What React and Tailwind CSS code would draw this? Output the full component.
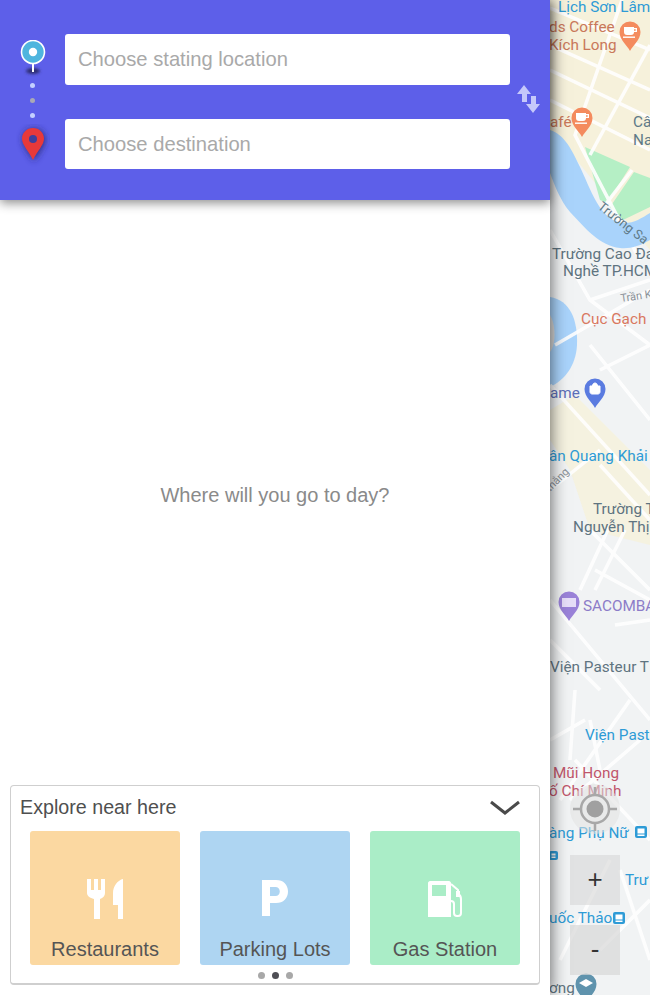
const FONT = "font-['Liberation_Sans',Arial,sans-serif]"

function StartPin() {
  return (
    <svg width="30" height="38" viewBox="0 0 30 38" className="block">
      <defs>
        <filter id="soft" x="-50%" y="-100%" width="200%" height="300%">
          <feGaussianBlur stdDeviation="1.6" />
        </filter>
      </defs>
      <ellipse cx="15" cy="31" rx="7" ry="3" fill="#2a2a6e" filter="url(#soft)" />
      <rect x="14" y="20" width="2" height="12" fill="#fff" />
      <circle cx="15" cy="12" r="11.5" fill="#4fb5de" stroke="#fff" strokeWidth="1.6" />
      <circle cx="15" cy="12" r="4.2" fill="#fff" />
    </svg>
  )
}

function EndPin() {
  return (
    <svg width="34" height="44" viewBox="0 0 34 44" className="block">
      <defs>
        <filter id="soft2" x="-50%" y="-50%" width="200%" height="200%">
          <feGaussianBlur stdDeviation="3.500" />
        </filter>
      </defs>
      <path d="M18 5c6.500 0 11 4.800 11 10.600 0 6-6.500 13-11 21.400C13.500 28.600 7 21.600 7 15.600 7 9.800 11.500 5 18 5z" fill="#26266f" opacity="0.9" filter="url(#soft2)" />
      <path d="M17 4c6.200 0 11 4.800 11 10.800 0 6.200-6.800 12.400-11 21.200C12.800 27.200 6 21 6 14.800 6 8.800 10.800 4 17 4z" fill="#e8393a" />
      <circle cx="17" cy="15" r="4" fill="#3f3f9c" />
    </svg>
  )
}

function SwapIcon() {
  return (
    <svg width="26" height="30" viewBox="0 0 26 30" fill="#c5c8fa" className="block">
      <path d="M8 0l7 9h-4v8H6V9H1z" />
      <path d="M17 27l7-9h-4v-8h-5v8h-5z" transform="translate(0 1)" />
    </svg>
  )
}

function ForkKnife() {
  return (
    <svg width="38" height="42" viewBox="0 0 38 42" fill="#fff" className="block">
      <path d="M1 1h4v11h3V1h4v11h3V1h4v14c0 3-2 5-5 6V41H8V21C4 20 1 18 1 15z" />
      <path d="M37 1v40h-5V27h-5V15C27 8 32 2 37 1z" />
    </svg>
  )
}

function ParkingIcon() {
  return (
    <svg width="28" height="38" viewBox="0 0 28 38" className="block">
      <path fillRule="evenodd" fill="#fff" d="M1 1h14c7.500 0 12 4.800 12 11.500S22.500 24 15 24H9v13H1zM9 8v9h5.500c2.600 0 4.300-1.800 4.300-4.500S17 8 14.500 8z" />
    </svg>
  )
}

function GasIcon() {
  return (
    <svg width="36" height="38" viewBox="0 0 36 38" className="block">
      <path fillRule="evenodd" fill="#fff" d="M3 1h19c1 0 2 1 2 2v34H1V3c0-1 1-2 2-2zM5 5v11h14V5z" />
      <path d="M24 4l7 6v4m0 0c2 1 3 3 3 5v14c0 2-1 3-3 3h-1c-2 0-3-1-3-3v-9c0-2-1-3-3-3" fill="none" stroke="#fff" strokeWidth="2" />
      <path d="M29 11h4v6h-4z" fill="#fff" />
    </svg>
  )
}

function Chevron() {
  return (
    <svg width="32" height="18" viewBox="0 0 32 18" className="block">
      <path d="M2 3l14 11L30 3" fill="none" stroke="#4a4a4a" strokeWidth="3" />
    </svg>
  )
}

function MapPin({ x, y, color, glyph }) {
  return (
    <g transform={`translate(${x} ${y})`}>
      <path d="M0 19C-3 13-10.500 8-10.500 0A10.500 10.500 0 0 1 10.500 0C10.500 8 3 13 0 19z" fill={color} />
      {glyph}
    </g>
  )
}

const cup = (
  <g fill="#fff">
    <path d="M-6-5h10v5c0 2-1 3-3 3h-4c-2 0-3-1-3-3z" />
    <path d="M4-4h3v4H4v-1.300h1.700v-1.400H4z" />
    <rect x="-7" y="4.500" width="12" height="1.400" />
  </g>
)

function BusBadge({ x, y, size = 12 }) {
  return (
    <g transform={`translate(${x} ${y})`}>
      <rect x="0" y="0" width={size} height={size} rx="2" fill="#2e9bd6" />
      <rect x="2.500" y="2.500" width={size - 5} height={size - 7} fill="#fff" />
      <rect x="2.500" y={size - 3.500} width={size - 5} height="1.500" fill="#fff" />
    </g>
  )
}

function MapLabel({ x, y, fill, size = 15.300, rotate, children }) {
  return (
    <text
      x={x}
      y={y}
      fill={fill}
      fontSize={size}
      fontFamily="Roboto, sans-serif"
      transform={rotate ? `rotate(${rotate} ${x} ${y})` : undefined}
    >
      {children}
    </text>
  )
}

function MapBackdrop() {
  const roads = [
    'M550 45L650 90', 'M550 70L650 118', 'M550 100L650 150', 'M550 8L650 50',
    'M622 0L575 135L640 260', 'M650 45L590 155', 'M632 170L605 205',
    'M550 230L590 300L650 345', 'M555 345L650 290', 'M590 300L650 280',
    'M550 385L650 495', 'M590 345L650 420', 'M600 370L650 345',
    'M550 490L600 450', 'M550 600L650 720', 'M550 640L600 690', 'M600 465L650 520',
    'M590 530L650 590', 'M610 525L580 590', 'M625 530L595 590', 'M595 570L650 600',
    'M615 625L650 620', 'M630 700L560 800', 'M575 690L570 760',
    'M590 720L600 770', 'M550 740L585 720', 'M570 800L640 740', 'M575 760L650 840',
    'M620 870L650 960', 'M600 950L650 900', 'M560 960L610 860',
  ]
  return (
    <svg width="100" height="995" viewBox="550 0 100 995" className="block">
      <rect x="550" y="0" width="100" height="995" fill="#f1f3f4" />
      <path d="M550 0H650V250L560 140L550 130z" fill="#f6f1db" />
      <path d="M575 395L650 470V545L590 530L570 470L550 440V410z" fill="#f6f1db" opacity="0.8" />
      <path d="M585 147L630 167L607 203L600 200z" fill="#b5efc5" />
      <path d="M634 172L650 178V207L623 220L610 207z" fill="#b5efc5" />
      <path d="M550 297C570 300 578 320 577 345C576 365 565 380 550 387z" fill="#a9d3fb" />
      <path d="M550 315C556 325 556 345 550 352z" fill="#d9d9d9" />
      <g fill="none" stroke="#fff" strokeWidth="3.500" opacity="0.9">
        {roads.map((d) => (
          <path key={d} d={d} />
        ))}
      </g>
      <path d="M550 130C565 135 572 150 580 167C590 187 600 223 625 223C634 223 642 218 650 213V240C640 246 630 249 620 248C600 246 585 228 570 212C560 200 555 186 550 173z" fill="#a9d3fb" />

      <MapLabel x="558" y="12" fill="#2e9bd6">Lịch Sơn Lâm</MapLabel>
      <MapLabel x="549" y="32" fill="#c9785a">ds Coffee</MapLabel>
      <MapLabel x="549" y="50" fill="#c9785a">Kích Long</MapLabel>
      <MapLabel x="550" y="127" fill="#c9785a">afé</MapLabel>
      <MapLabel x="633" y="127" fill="#5f7a88">Câ</MapLabel>
      <MapLabel x="633" y="145" fill="#5f7a88">Na</MapLabel>
      <MapLabel x="597" y="208" fill="#5f7a88" size="13" rotate="38">Trường Sa</MapLabel>
      <MapLabel x="552" y="259" fill="#5f7480">Trường Cao Đa</MapLabel>
      <MapLabel x="563" y="276" fill="#5f7480">Nghề TP.HCM</MapLabel>
      <MapLabel x="621" y="302" fill="#8a9198" size="11" rotate="-8">Trần K</MapLabel>
      <MapLabel x="581" y="324" fill="#d9785f">Cục Gạch</MapLabel>
      <MapLabel x="550" y="398" fill="#5c6fb8">ame</MapLabel>
      <MapLabel x="549" y="461" fill="#2e9bd6">ân Quang Khải</MapLabel>
      <MapLabel x="550" y="492" fill="#8a9198" size="11" rotate="-45">thắng</MapLabel>
      <MapLabel x="593" y="514" fill="#5f7480">Trường T</MapLabel>
      <MapLabel x="573" y="532" fill="#5f7480">Nguyễn Thị</MapLabel>
      <MapLabel x="583" y="611" fill="#8c7cc8">SACOMBA</MapLabel>
      <MapLabel x="550" y="672" fill="#5f7480">Viện Pasteur T</MapLabel>
      <MapLabel x="585" y="740" fill="#2e9bd6">Viện Past</MapLabel>
      <MapLabel x="553" y="778" fill="#c0566b">Mũi Họng</MapLabel>
      <MapLabel x="549" y="796" fill="#c0566b">ố Chí Minh</MapLabel>
      <MapLabel x="549" y="838" fill="#2e9bd6">àng Phụ Nữ</MapLabel>
      <MapLabel x="625" y="885" fill="#2e9bd6">Trư</MapLabel>
      <MapLabel x="549" y="923" fill="#2e9bd6">uốc Thảo</MapLabel>
      <MapLabel x="549" y="993" fill="#5f7480">ơng</MapLabel>

      <MapPin x={630} y={32} color="#f48b5e" glyph={cup} />
      <MapPin x={582} y={118} color="#f48b5e" glyph={cup} />
      <MapPin x={595} y={389} color="#5a7be0" glyph={<path d="M-5-3h10v6c0 1-1 2-2 2h-6c-1 0-2-1-2-2zM-2.500-3c0-4 5-4 5 0" fill="#fff" stroke="#fff" strokeWidth="1" />} />
      <MapPin x={569} y={602} color="#9a82d8" glyph={<rect x="-7" y="-4" width="14" height="9" fill="#e6def8" />} />
      <MapPin x={586} y={984} color="#5f93ad" glyph={<path d="M-7-1L0-5L7-1L0 3z" fill="#fff" />} />
      <BusBadge x={635} y={826} />
      <BusBadge x={549} y={851} size={9} />
      <BusBadge x={613} y={912} />
    </svg>
  )
}

function ExploreTile({ label, bg, children }) {
  return (
    <div className={`flex h-[134px] w-[150px] flex-col items-center justify-end rounded-[3px] ${bg}`}>
      <div className="flex h-[42px] items-center justify-center">{children}</div>
      <div className="mb-[5px] mt-[18px] text-[20px] leading-[22px] text-[#555]">{label}</div>
    </div>
  )
}

export default function App() {
  return (
    <div className={`relative flex h-[995px] w-[650px] overflow-hidden bg-white ${FONT}`}>
      <div className="relative z-10 flex w-[550px] shrink-0 flex-col bg-white shadow-[0_0_16px_rgba(0,0,0,0.65)]">
        <header className="relative flex h-[200px] shrink-0 bg-[#5d5fe9] shadow-[0_3px_10px_rgba(0,0,0,0.45)]">
          <div className="flex w-[65px] shrink-0 flex-col items-center pt-[40px]">
            <StartPin />
            <div className="mt-[5px] flex flex-col gap-[10px]">
              <span className="h-[5px] w-[5px] rounded-full bg-[#c4d0ff]" />
              <span className="h-[5px] w-[5px] rounded-full bg-[#a9a9b5]" />
              <span className="h-[5px] w-[5px] rounded-full bg-[#c4d0ff]" />
            </div>
            <div className="mt-[6px]">
              <EndPin />
            </div>
          </div>
          <div className="flex w-[445px] flex-col gap-[34px] pt-[34px]">
            <input
              placeholder="Choose stating location"
              className="h-[51px] rounded-[3px] bg-white px-[13px] text-[20.200px] text-[#555] outline-none placeholder:text-[#a9a9a9]"
            />
            <input
              placeholder="Choose destination"
              className="h-[50px] rounded-[3px] bg-white px-[13px] text-[20.200px] text-[#555] outline-none placeholder:text-[#a9a9a9]"
            />
          </div>
          <div className="ml-[6px] pt-[85px]">
            <SwapIcon />
          </div>
        </header>

        <main className="flex flex-1 items-center justify-center pt-[5px] text-[20px] text-[#8a8a8a]">
          Where will you go to day?
        </main>

        <section className="mx-[10px] mb-[10px] h-[200px] rounded-[4px] border border-b-2 border-[#cfcfcf] bg-white">
          <div className="flex h-[45px] items-center justify-between pb-[2px] pl-[9px] pr-[18px]">
            <span className="text-[19.700px] text-[#4f4f4f]">Explore near here</span>
            <Chevron />
          </div>
          <div className="flex gap-[20px] px-[19px]">
            <ExploreTile label="Restaurants" bg="bg-[#fbd8a1]">
              <ForkKnife />
            </ExploreTile>
            <ExploreTile label="Parking Lots" bg="bg-[#aed5f2]">
              <div className="-mt-[3px]">
                <ParkingIcon />
              </div>
            </ExploreTile>
            <ExploreTile label="Gas Station" bg="bg-[#aaedc7]">
              <GasIcon />
            </ExploreTile>
          </div>
          <div className="mt-[6px] flex justify-center gap-[7px] pt-[1px]">
            <span className="h-[7px] w-[7px] rounded-full bg-[#a8a8a8]" />
            <span className="h-[7px] w-[7px] rounded-full bg-[#4f4f55]" />
            <span className="h-[7px] w-[7px] rounded-full bg-[#a8a8a8]" />
          </div>
        </section>
      </div>

      <div className="relative w-[100px] shrink-0">
        <MapBackdrop />
        <div className="absolute left-[20px] top-[784px] flex h-[50px] w-[50px] items-center justify-center rounded-full bg-[rgba(225,225,225,0.55)]">
          <svg width="46" height="46" viewBox="0 0 46 46" className="block">
            <circle cx="23" cy="23" r="14" fill="none" stroke="#a8a8a8" strokeWidth="2.500" />
            <circle cx="23" cy="23" r="8.500" fill="#a0a0a0" />
            <path d="M1 23h9M36 23h9M23 1v9M23 36v9" stroke="#a8a8a8" strokeWidth="2.500" />
          </svg>
        </div>
        <div className="absolute left-[20px] top-[855px] flex h-[50px] w-[50px] items-center justify-center bg-[rgba(215,215,215,0.6)] pb-[2px] text-[26px] text-[#333]">
          +
        </div>
        <div className="absolute left-[20px] top-[925px] flex h-[50px] w-[50px] items-center justify-center bg-[rgba(215,215,215,0.7)] pb-[2px] text-[26px] text-[#333]">
          -
        </div>
      </div>
    </div>
  )
}
